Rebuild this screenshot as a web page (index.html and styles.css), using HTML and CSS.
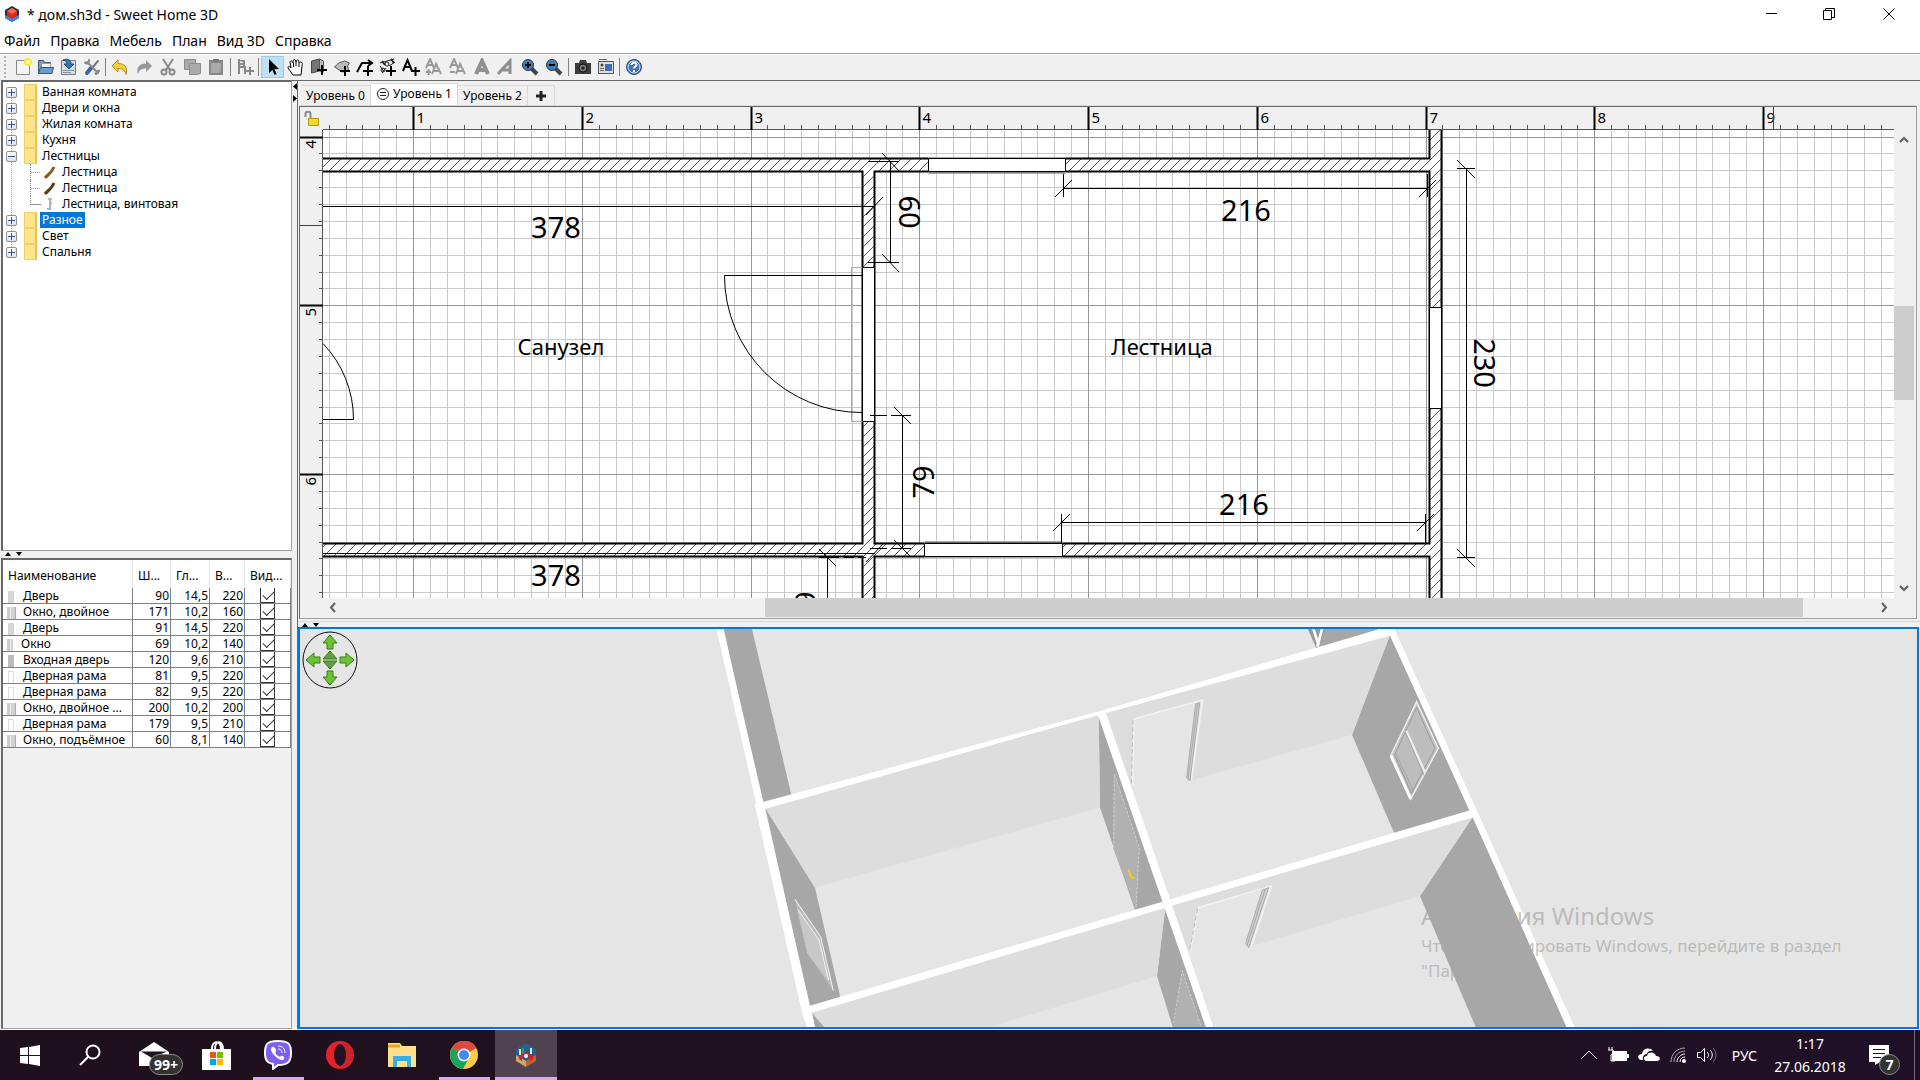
FILE: index.html
```html
<!DOCTYPE html>
<html lang="ru">
<head>
    <meta charset="UTF-8">
    <meta name="viewport" content="width=device-width, initial-scale=1.0">
    <title>дом.sh3d - Sweet Home 3D</title>
    <link rel="stylesheet" href="styles.css">
</head>
<body>
    <header class="titlebar">
        <svg class="app-icon" width="16" height="16" viewBox="0 0 16 16"><path d="M8 0l7 4v8l-7 4-7-4V4z" fill="#16304f"/><path d="M1 9l7 3 7-3v3l-7 4-7-4z" fill="#2f8fd8"/><path d="M8 2l5 3v5l-5 3-5-3V5z" fill="#e0251b"/><path d="M8 2l5 3-5 3-5-3z" fill="#ff6b4a"/></svg>
        <h1>* дом.sh3d - Sweet Home 3D</h1>
        <div class="window-buttons">
            <button aria-label="Свернуть"><svg width="12" height="12"><path d="M1 5.5h11" stroke="#000"/></svg></button>
            <button aria-label="Восстановить"><svg width="12" height="12" fill="none" stroke="#000"><path d="M.5 2.5h8v9h-8zM2.500 2.500v-2h9v9h-3"/></svg></button>
            <button aria-label="Закрыть"><svg width="12" height="12"><path d="M.5.5l11 11M11.500.500l-11 11" stroke="#000"/></svg></button>
        </div>
    </header>

    <nav class="menubar">
        <button>Файл</button>
        <button>Правка</button>
        <button>Мебель</button>
        <button>План</button>
        <button>Вид 3D</button>
        <button>Справка</button>
    </nav>

    <div class="toolbar">
        <span class="grip"></span>
        <div class="tools">
            <button aria-label="Новый"><svg width="18" height="18"><path d="M2.500 2.500h13v14h-13z" fill="#f4f4f4" stroke="#8a8a8a"/><circle cx="14" cy="4" r="4" fill="#f8ea3c"/><circle cx="14" cy="4" r="2" fill="#fffbb0"/></svg></button>
            <button aria-label="Открыть"><svg width="18" height="18"><path d="M1.500 15V2.500h5l1 2h6V15z" fill="#8b98a8" stroke="#4d5d70"/><path d="M4.500 5.500h9v5h-9z" fill="#f6f6f6" stroke="#999"/><path d="M1.500 15.500l2-6h13l-1.500 6z" fill="#6d9ccc" stroke="#2c5a92"/></svg></button>
            <button aria-label="Сохранить"><svg width="18" height="18"><path d="M1.500 2.500h14v14h-14z" fill="#d9dde0" stroke="#778"/><path d="M3 12.500h11M3 14.500h8" stroke="#8a9298"/><path d="M3 2c5-2 8 0 8 4h3l-5 5-5-5h3c0-2-1-3-4-4z" fill="#2d78b4" stroke="#1b4f80"/></svg></button>
            <button aria-label="Настройки"><svg width="18" height="18" fill="none" stroke-linecap="round"><path d="M15 3L9 10" stroke="#777" stroke-width="2"/><path d="M8 10l-4 5" stroke="#3566a8" stroke-width="4"/><path d="M4 4l11 11" stroke="#888" stroke-width="2"/><path d="M2 4.500c2 2 4 1 4-2.500" stroke="#888" stroke-width="2"/><path d="M13 15.500l2.500-2.500" stroke="#888" stroke-width="3"/></svg></button>
        </div>
        <span class="sep"></span>
        <div class="tools wide">
            <button aria-label="Отменить"><svg width="18" height="18"><path d="M1 8l6-6v3.500c7 0 10 4 8 11-1-4-3-6-8-6V14z" fill="#f3cf3a" stroke="#b8901a"/></svg></button>
            <button aria-label="Повторить"><svg width="18" height="18"><path d="M17 8l-6-6v3.500c-7 0-10 4-8 11 1-4 3-6 8-6V14z" fill="#999"/></svg></button>
            <button aria-label="Вырезать"><svg width="18" height="18" fill="none" stroke="#888" stroke-width="2"><path d="M4 1l7 11M14 1L7 12"/><circle cx="5" cy="14" r="2.500"/><circle cx="13" cy="14" r="2.500"/></svg></button>
            <button aria-label="Копировать"><svg width="18" height="18" fill="#aaa" stroke="#8d8d8d"><path d="M1.500 1.500h11v10h-11z"/><path d="M6.500 5.500h11v10l-3 1h-8z"/></svg></button>
            <button aria-label="Вставить"><svg width="18" height="18"><path d="M2 2h14v15H2z" fill="#888"/><path d="M4 5h10v8l-2 2H4z" fill="#aaa"/><path d="M6 1h6v3H6z" fill="#777"/></svg></button>
        </div>
        <span class="sep"></span>
        <div class="tools">
            <button aria-label="Добавить мебель"><svg width="18" height="18" fill="none" stroke="#888" stroke-width="2"><path d="M3 1v15M3 9h6v7M3 2l5 1v6M4 6h4M10 13h8M14 9v8"/></svg></button>
        </div>
        <span class="sep"></span>
        <div class="tools">
            <button class="pressed" aria-label="Выбрать"><svg width="18" height="18"><path d="M5 1v14l3.500-3 2 5 2-1-2-5H15z" fill="#000"/></svg></button>
            <button aria-label="Панорама"><svg width="18" height="18"><path d="M6 17l-5-7c0-2 2-2 3 0L3 4c1-2 2-1 3 1 0-4 2-5 3-1 1-3 3-3 3 1 2-2 4-1 3 3l-1 9z" fill="#fff" stroke="#000"/><path d="M6.500 5v4M9 4v4M12 5v4" stroke="#000"/></svg></button>
            <button aria-label="Стены"><svg width="18" height="18"><path d="M1.500 3l8-2v12l-8 2z" fill="#777" stroke="#444"/><path d="M9.500 1l4 2v11l-4-1z" fill="#bbb" stroke="#555"/><path d="M7 12h10M12 7v10" stroke="#000" stroke-width="2"/></svg></button>
            <button aria-label="Комнаты"><svg width="18" height="18"><path d="M1.500 9l4-4 6-2 5 2-2 3 1 4-6 2z" fill="#bbb" stroke="#555"/><path d="M7 13h10M12 8v10" stroke="#000" stroke-width="2"/></svg></button>
            <button aria-label="Ломаные"><svg width="18" height="18" fill="none" stroke="#000" stroke-width="2"><path d="M1 14l5-9h9M12 2l4 3-4 3M7 13h10M12 8v10"/></svg></button>
            <button aria-label="Размеры"><svg width="18" height="18" fill="none" stroke="#222"><path d="M1 5l14-4M1 8l4 6M3 15l4-5M10 8l6-4" stroke-width="1"/><path d="M3 3l3 4M12 1l3 4" stroke-width="2"/><circle cx="8" cy="6" r="2"/><circle cx="4" cy="12" r="2"/><path d="M7 13h10M12 8v10" stroke="#000" stroke-width="2"/></svg></button>
            <button aria-label="Текст"><svg width="18" height="18" fill="none" stroke="#000" stroke-width="2"><path d="M1 13L5.500 2 10 13M3 9h5M9 13h9M13.500 9v9"/></svg></button>
        </div>
        <div class="tools wide">
            <button aria-label="Увеличить текст"><svg width="18" height="18" fill="none" stroke="#999" stroke-width="2"><path d="M1 10L5 1l4 9M2 7h6M7 16l4-10 5 10M8 13h7M1 14h5M3.500 11v6"/></svg></button>
            <button aria-label="Уменьшить текст"><svg width="18" height="18" fill="none" stroke="#999" stroke-width="2"><path d="M1 10L5 1l4 9M2 7h6M7 16l4-10 5 10M8 13h7M1 14h5"/></svg></button>
            <button aria-label="Полужирный"><svg width="18" height="18" fill="none" stroke="#8f8f8f" stroke-width="4"><path d="M3 16L9 3l6 13M5 12h8"/></svg></button>
            <button aria-label="Курсив"><svg width="18" height="18" fill="none" stroke="#8f8f8f" stroke-width="3"><path d="M1 16L13 3v13M5 12h8"/></svg></button>
            <button aria-label="Увеличить"><svg width="18" height="18"><path d="M10 10l6 6" stroke="#444" stroke-width="4"/><circle cx="7" cy="7" r="5.500" fill="#3d7fc0" stroke="#333"/><path d="M4 7h6M7 4v6" stroke="#000" stroke-width="2"/></svg></button>
            <button aria-label="Уменьшить"><svg width="18" height="18"><path d="M10 10l6 6" stroke="#444" stroke-width="4"/><circle cx="7" cy="7" r="5.500" fill="#3d7fc0" stroke="#333"/><path d="M4 7h6" stroke="#000" stroke-width="2"/></svg></button>
        </div>
        <span class="sep"></span>
        <div class="tools">
            <button aria-label="Фото"><svg width="18" height="18"><path d="M1 5h4l1-3h6l1 3h4v11H1z" fill="#3b3b3b"/><circle cx="9" cy="10" r="4" fill="#777" stroke="#111"/><circle cx="9" cy="10" r="1.500" fill="#222"/></svg></button>
            <button aria-label="Видео"><svg width="18" height="18"><path d="M1.500 3.500h15v12h-15z" fill="#ddd" stroke="#555"/><path d="M8 6h7v7H8z" fill="#3c6fb4"/><circle cx="5" cy="7" r="1.500" fill="#444"/><path d="M3 10.500h4M3 12.500h4M2 1.500h8" stroke="#666"/></svg></button>
        </div>
        <span class="sep"></span>
        <div class="tools">
            <button aria-label="Справка"><svg width="18" height="18"><circle cx="9" cy="9" r="7.500" fill="#3f72b5" stroke="#1f4987"/><circle cx="9" cy="9" r="6" fill="none" stroke="#dbe7f5"/><path d="M6.500 7c0-3 5-3 5 0 0 1.500-2.500 1.500-2.500 3.500M9 12v2" fill="none" stroke="#fff" stroke-width="2"/></svg></button>
        </div>
    </div>

    <main class="workspace">
        <div class="side">
            <section class="catalog">
                <ul class="tree">
                    <li><i class="box plus"></i><i class="folder"></i><span>Ванная комната</span></li>
                    <li><i class="box plus"></i><i class="folder"></i><span>Двери и окна</span></li>
                    <li><i class="box plus"></i><i class="folder"></i><span>Жилая комната</span></li>
                    <li><i class="box plus"></i><i class="folder"></i><span>Кухня</span></li>
                    <li><i class="box"></i><i class="folder"></i><span>Лестницы</span></li>
                    <li class="leaf"><svg width="14" height="14"><path d="M2 13c2-3 6-4 9-11" fill="none" stroke="#8a5a1c" stroke-width="3"/></svg><span>Лестница</span></li>
                    <li class="leaf"><svg width="14" height="14"><path d="M2 13c2-3 6-4 9-11" fill="none" stroke="#5c3a12" stroke-width="3"/></svg><span>Лестница</span></li>
                    <li class="leaf last"><svg width="14" height="14"><path d="M5 2h4M7 1v12M7 6h2M4 12h4" fill="none" stroke="#b5b5b5" stroke-width="2"/></svg><span>Лестница, винтовая</span></li>
                    <li><i class="box plus"></i><i class="folder"></i><span class="selected">Разное</span></li>
                    <li><i class="box plus"></i><i class="folder"></i><span>Свет</span></li>
                    <li><i class="box plus"></i><i class="folder"></i><span>Спальня</span></li>
                </ul>
            </section>
            <div class="splitter"><svg width="24" height="5"><path d="M2 5l3-4 3 4zM13 1l3 4 3-4z"/></svg></div>
            <section class="furniture">
                <table>
                    <colgroup><col class="c-name"><col class="c-w"><col class="c-d"><col class="c-h"><col class="c-vis"></colgroup>
                    <thead><tr><th>Наименование</th><th>Ш...</th><th>Гл...</th><th>В...</th><th>Вид...</th></tr></thead>
                    <tbody>
                        <tr><td><i class="thumb door"></i>Дверь</td><td>90</td><td>14,5</td><td>220</td><td><input type="checkbox" checked aria-label="Видимость"></td></tr>
                        <tr><td><i class="thumb pane"></i>Окно, двойное</td><td>171</td><td>10,2</td><td>160</td><td><input type="checkbox" checked aria-label="Видимость"></td></tr>
                        <tr><td><i class="thumb door"></i>Дверь</td><td>91</td><td>14,5</td><td>220</td><td><input type="checkbox" checked aria-label="Видимость"></td></tr>
                        <tr><td><i class="thumb pane small"></i>Окно</td><td>69</td><td>10,2</td><td>140</td><td><input type="checkbox" checked aria-label="Видимость"></td></tr>
                        <tr><td><i class="thumb door entry"></i>Входная дверь</td><td>120</td><td>9,6</td><td>210</td><td><input type="checkbox" checked aria-label="Видимость"></td></tr>
                        <tr><td><i class="thumb frame"></i>Дверная рама</td><td>81</td><td>9,5</td><td>220</td><td><input type="checkbox" checked aria-label="Видимость"></td></tr>
                        <tr><td><i class="thumb frame"></i>Дверная рама</td><td>82</td><td>9,5</td><td>220</td><td><input type="checkbox" checked aria-label="Видимость"></td></tr>
                        <tr><td><i class="thumb pane"></i>Окно, двойное ...</td><td>200</td><td>10,2</td><td>200</td><td><input type="checkbox" checked aria-label="Видимость"></td></tr>
                        <tr><td><i class="thumb frame"></i>Дверная рама</td><td>179</td><td>9,5</td><td>210</td><td><input type="checkbox" checked aria-label="Видимость"></td></tr>
                        <tr><td><i class="thumb pane"></i>Окно, подъёмное</td><td>60</td><td>8,1</td><td>140</td><td><input type="checkbox" checked aria-label="Видимость"></td></tr>
                    </tbody>
                </table>
            </section>
        </div>

        <div class="vsplit"><svg width="6" height="30"><path d="M5 2v7L1 5.500zM1 14v7l4-3.500z"/></svg></div>

        <div class="home">
            <section class="plan">
                <div class="levels">
                    <button>Уровень 0</button>
                    <button class="active"><svg width="14" height="14" fill="none" stroke="#222"><circle cx="7" cy="7" r="5.500"/><path d="M4 5.500h6M4 8.500h6"/></svg>Уровень 1</button>
                    <button>Уровень 2</button>
                    <button class="add" aria-label="Добавить уровень"><svg width="12" height="12"><path d="M6 1v10M1 6h10" stroke="#222" stroke-width="3"/></svg></button>
                </div>
                <div class="plan-grid">
                    <div class="lock"><svg width="16" height="18"><path d="M1.500 7V4c0-3 5-3 5 0v5" fill="none" stroke="#888" stroke-width="2"/><path d="M4.500 8.500h10v7h-10z" fill="#f2d92a" stroke="#b59a14"/></svg></div>
                    <svg class="ruler-top" id="rulerTop"></svg>
                    <div class="corner"></div>
                    <svg class="ruler-left" id="rulerLeft"></svg>
                    <svg class="drawing">
                        <defs>
                            <pattern id="hatch" width="10" height="10" patternUnits="userSpaceOnUse">
                                <path d="M0 0h10v10H0z" fill="#fff"/>
                                <path d="M-1 11L11 -1M-1 1L1 -1M9 11L11 9" stroke="#555" stroke-width="1"/>
                            </pattern>
                        </defs>
                        <g id="gridLines"></g>
                        <g transform="translate(-323 -130)">
                            <!-- стены -->
                            <path class="wall-fill" d="M300 158H1429V120H1442V610H1429V556H874V610H862V556H300V543H862V171H300zM874 171V543H1429V171z" fill-rule="evenodd"/>
                            <path class="wall" d="M300 158.500H1429.500V120M300 171.500H862.500V543.500H300M300 556.500H862.500V610M874.500 610V556.500H1429.500V610M1441.500 120V610M874.500 171.500H1429.500V543.500H874.500z"/>
                            <!-- окна и двери -->
                            <path class="ghost" d="M851.500 267.500h23v154h-23zM928.500 157.500h137v16h-137zM924.500 541.500h138v16h-138z"/>
                            <path class="opening" d="M862.500 267.500h12v154h-12zM928.500 158.500h137v13h-137zM924.500 543.500h138v13h-138zM1429.500 307.500h12v101h-12z"/>
                            <path class="line" d="M862 275.500H724.500A137 137 0 0 0 862 412.500"/>
                            <path class="line" d="M323 343.500A110 110 0 0 1 353.500 419.500H323"/>
                            <!-- размеры -->
                            <path class="line" d="M323 206.500H875M866 215l17 -18M323 553.500H875M866 562l17 -18"/>
                            <path class="line" d="M890.500 161V262M868 161.500h31M868 262.500h31M882 153l17 18M882 254l17 18"/>
                            <path class="line" d="M902.500 415V548M870 415.500h17M891 415.500h20M870 548.500h17M891 548.500h20M894 407l17 17M894 540l17 17"/>
                            <path class="line" d="M1063 188.500H1428M1063.500 174v23M1427.500 174v23M1055 197l17 -17M1419 197l17 -17"/>
                            <path class="line" d="M1061 522.500H1426M1061.500 514v29M1425.500 514v29M1053 531l17 -17M1417 531l17 -17"/>
                            <path class="line" d="M1466.500 168V557M1457 168.500h18M1457 557.500h18M1457 160l18 18M1457 549l18 18"/>
                            <path class="line" d="M819 557.500h20M844 557.500h10M858 557.500h8M827.500 557V610M819 549l17 17"/>
                            <g class="dim">
                                <text x="556" y="238">378</text>
                                <text x="556" y="586">378</text>
                                <text x="1246" y="221">216</text>
                                <text x="1244" y="515">216</text>
                                <text transform="translate(899 212) rotate(90)">60</text>
                                <text transform="translate(934 482) rotate(-90)">79</text>
                                <text transform="translate(1474 363) rotate(90)">230</text>
                                <text transform="translate(816 608) rotate(-90)">79</text>
                            </g>
                            <g class="room">
                                <text x="561" y="355">Санузел</text>
                                <text x="1162" y="355">Лестница</text>
                            </g>
                        </g>
                    </svg>
                    <div class="scroll-v">
                        <svg width="20" height="20"><path d="M6 12l4-4 4 4" fill="none" stroke="#606060" stroke-width="2"/></svg>
                        <div class="track-v"><div class="thumb-v"></div></div>
                        <svg width="20" height="20"><path d="M6 8l4 4 4-4" fill="none" stroke="#606060" stroke-width="2"/></svg>
                    </div>
                    <div class="scroll-h">
                        <svg width="20" height="20"><path d="M12 5L8 9.500l4 4.500" fill="none" stroke="#606060" stroke-width="2"/></svg>
                        <div class="track-h"><div class="thumb-h"></div></div>
                        <svg width="20" height="20"><path d="M8 5l4 4.500L8 14" fill="none" stroke="#606060" stroke-width="2"/></svg>
                    </div>
                </div>
            </section>

            <div class="splitter"><svg width="24" height="5"><path d="M2 5l3-4 3 4zM13 1l3 4 3-4z"/></svg></div>

            <section class="view3d">
                <svg class="scene">
                    <g transform="translate(400 -9) scale(.33333)">
                        <!-- затенённые стены -->
                        <g fill="#a7a7a7">
                            <path d="M70 20H154L274 524L188 550z"/>
                            <path d="M196 564L345 803L421 1132L328 1160z"/>
                            <path d="M336 1176L375 1224H345z"/>
                            <path d="M1196 285L1200 562L1305 870L1390 848z"/>
                            <path d="M1395 865L1371 1068L1420 1226H1524z"/>
                            <path d="M2070 44L2310 575L2082 638L1956 344z"/>
                            <path d="M2318 590L2602 1226H2329L2160 828z"/>
                            <path d="M1880 20H2060L1846 86z"/>
                        </g>
                        <!-- светлые стены -->
                        <g fill="#ddd">
                            <path d="M196 564L1196 285L1200 562L345 803z"/>
                            <path d="M336 1178L1396 865L1371 1068L860 1224H375z"/>
                            <path d="M1215 280L2070 46L1956 344L1475 481L1508 240L1302 297L1295 510z"/>
                            <path d="M1415 856L2318 592L2160 828L1658 978L1714 798L1495 862L1468 1000z"/>
                        </g>
                        <!-- дверные рамы -->
                        <g fill="none" stroke="#f1f1f1" stroke-width="5">
                            <path d="M1302 297L1508 240L1474 479M1302 297L1297 500"/>
                            <path d="M1495 863L1714 798L1655 978M1495 863L1470 1000"/>
                        </g>
                        <g fill="#cfcfcf" stroke="#a9a9a9" stroke-width="3">
                            <path d="M1487 252L1499 248L1470 482L1460 474zM1493 250L1464 478"/>
                            <path d="M1687 811L1706 803L1646 983L1637 970zM1696 806L1641 976"/>
                        </g>
                        <path d="M1299 300L1294 500M1493 866L1468 996" stroke="#bbb" stroke-width="3" stroke-dasharray="14 8"/>
                        <!-- двери -->
                        <g fill="#b1b1b1">
                            <path d="M1243 462L1318 683L1308 867L1239 683z"/>
                            <path d="M1447 1052L1505 1224H1420z"/>
                        </g>
                        <path d="M1241 683L1243 462L1318 683L1308 867M1420 1210L1447 1052L1505 1224" fill="none" stroke="#e4e4e4" stroke-width="2" stroke-dasharray="8 5"/>
                        <path d="M1286 748Q1290 775 1304 775" fill="none" stroke="#f2d20a" stroke-width="6"/>
                        <!-- окна -->
                        <path d="M285 838L362 950L400 1112L322 1000z" fill="#bcbcbc"/>
                        <path d="M322 1000L292 870L355 960L388 1085z" fill="#c8c8c8"/>
                        <path d="M285 838L362 950L400 1112M293 868L357 960L386 1080" fill="none" stroke="#f5f5f5" stroke-width="3"/>
                        <path d="M2150 245L2215 385L2132 538L2072 407z" fill="#c2c2c2" stroke="#f2f2f2" stroke-width="4"/>
                        <path d="M2150 262L2205 386L2134 520L2084 405z" fill="#bdbdbd" stroke="#999" stroke-width="3"/>
                        <path d="M2073 407L2132 536" stroke="#fff" stroke-width="9"/>
                        <path d="M2119 332L2176 460" stroke="#eee" stroke-width="7"/>
                        <path d="M2117 337L2172 466M2088 402L2140 512" stroke="#999" stroke-width="2"/>
                        <path d="M1820 20H1880L1850 86z" fill="#999"/>
                        <path d="M1838 20L1856 76M1868 20L1852 80" stroke="#fff" stroke-width="8"/>
                        <!-- торцы стен -->
                        <g fill="#fff">
                            <path d="M48 20H68L190 545L330 1157L346 1226H323L308 1185L167 565L163 553L169 552z"/>
                            <path d="M185 547L1200 273L2065 20H2085L2070 47L1215 280L195 567z"/>
                            <path d="M325 1159L1387 845L2310 571L2320 592L1415 857L330 1180z"/>
                            <path d="M1194 286L1218 279L1410 838L1542 1226H1519L1395 867z"/>
                            <path d="M2067 40L2080 20L2330 570L2460 860L2626 1226H2602L2318 592z"/>
                        </g>
                    </g>
                </svg>
                <svg class="compass" width="56" height="60">
                    <ellipse cx="28" cy="30" rx="27" ry="28" fill="none" stroke="#111"/>
                    <g fill="#6cc433" stroke="#3a7d14">
                        <path d="M28 5l7 8h-4v6h-6v-6h-4z"/>
                        <path d="M28 55l7-8h-4v-6h-6v6h-4z"/>
                        <path d="M4 30l8-7v4h6v6h-6v4z"/>
                        <path d="M52 30l-8-7v4h-6v6h6v4z"/>
                        <path d="M28 21l7 8H21zM28 39l7-8H21z" fill="#5fa044"/>
                    </g>
                </svg>
                <div class="watermark">
                    <h2>Активация Windows</h2>
                    <p>Чтобы активировать Windows, перейдите в раздел<br>"Параметры".</p>
                </div>
            </section>
        </div>
    </main>

    <footer class="taskbar">
        <button class="task narrow" aria-label="Пуск"><svg width="20" height="22" fill="#fff"><path d="M0 4l8-1v8H0zM9 3l11-2v10H9zM0 12h8v8l-8-1zM9 12h11v10L9 20z"/></svg></button>
        <button class="task narrow search" aria-label="Поиск"><svg width="22" height="22" fill="none" stroke="#fff" stroke-width="2"><circle cx="14" cy="8" r="6.500"/><path d="M9.500 12.500L1 21"/></svg></button>
        <button class="task" aria-label="Почта"><svg width="30" height="26" fill="#fff"><path d="M0 10L15 0l15 10v14H0z"/><path d="M2 9.500h26L13 16z" fill="#201220"/></svg><span class="badge">99+</span></button>
        <button class="task" aria-label="Магазин"><svg width="29" height="30"><path d="M0 9h29v21H0z" fill="#fff"/><path d="M10 9c0-9 9-9 9 0M13 9c0-9 8-9 8 0" fill="none" stroke="#fff" stroke-width="2"/><path d="M8 12h6v6H8z" fill="#f25022"/><path d="M15 12h6v6h-6z" fill="#7fba00"/><path d="M8 19h6v6H8z" fill="#00a4ef"/><path d="M15 19h6v6h-6z" fill="#ffb900"/></svg></button>
        <button class="task open" aria-label="Viber"><svg width="30" height="30"><path d="M15 1c11 0 13 3 13 12s-3 12-13 12l-5 4v-5c-6-1-8-4-8-11C2 4 4 1 15 1z" fill="#7d5ef0" stroke="#fff" stroke-width="2"/><path d="M9 7c-2 2-1 5 3 9s8 5 9 3-2-4-3-3-2 1-4-1-2-3-1-4-2-5-4-4z" fill="#fff"/><path d="M15 6c5 0 7 3 7 7M15 9c3 0 4 2 4 4" fill="none" stroke="#fff"/></svg></button>
        <button class="task" aria-label="Opera"><svg width="30" height="30"><ellipse cx="15" cy="15" rx="14" ry="14" fill="#e8202c"/><path d="M15 1c18 0 18 28 0 28 8-3 8-25 0-28z" fill="#c9232c"/><ellipse cx="15" cy="15" rx="6" ry="11" fill="#201220"/></svg></button>
        <button class="task" aria-label="Проводник"><svg width="28" height="26"><path d="M0 1h12l2 3h14v21H0z" fill="#ffe08a"/><path d="M0 4h12" stroke="#e6a817" stroke-width="3"/><path d="M5 25V14h18v11h-4v-6H9v6z" fill="#35b0e6"/></svg></button>
        <button class="task open" aria-label="Chrome"><svg width="28" height="28"><circle cx="14" cy="14" r="14" fill="#fc4"/><path d="M14 14L2 7a14 14 0 0 1 24.500 0z" fill="#dd4b3e"/><path d="M14 14L2 7a14 14 0 0 0 11 21l6-11z" fill="#1aa260"/><circle cx="14" cy="14" r="6.500" fill="#fff"/><circle cx="14" cy="14" r="5" fill="#4688f1"/></svg></button>
        <button class="task current" aria-label="Sweet Home 3D"><svg width="22" height="24"><path d="M11 0l10 6v12l-10 6-10-6V6z" fill="#27608f"/><path d="M1 12l10 6v6L1 18z" fill="#d9a066"/><path d="M21 12l-10 6v6l10-6z" fill="#b8632c"/><path d="M5 6v6M16 5v6" stroke="#d8e8dc" stroke-width="2"/><path d="M8 5v6" stroke="#3f9a4c" stroke-width="2"/><path d="M4 13l7-4 7 4v3l-3 2v-3h-8v3l-3-2z" fill="#d3202a"/><circle cx="11" cy="13" r="2" fill="#fff"/></svg></button>

        <div class="tray">
            <svg width="18" height="12"><path d="M1 10l8-8 8 8" fill="none" stroke="#fff"/></svg>
            <svg width="22" height="16"><path d="M5.500 4.500h14v9h-14z" fill="#fff" stroke="#fff"/><path d="M20 7h2v4h-2z" fill="#fff"/><path d="M1 3h5v4l-2 1v6h4M2 0v3M5 0v3" fill="none" stroke="#fff"/></svg>
            <svg width="22" height="14" fill="#fff"><path d="M3 12c-4-1-4-6 1-6 1-6 8-7 11-3-3-1-6 1-6 3-3 0-5 3-4 6z"/><path d="M8 13c-3-1-3-5 1-5 1-5 8-4 9 0 5 0 5 5 1 5z"/></svg>
            <svg width="18" height="18" fill="none"><path d="M2 16C2 8 8 2 16 2M5 16c0-6 5-11 11-11" stroke="#aaa"/><path d="M8 16c0-4 4-8 8-8M11 16c0-3 2-5 5-5" stroke="#fff"/><circle cx="15" cy="15" r="2" fill="#fff"/></svg>
            <svg width="22" height="16" fill="none" stroke="#fff"><path d="M1.500 5.500h3l4-4v13l-4-4h-3zM11 5c2 2 2 4 0 6M14 3c3 3 3 7 0 10"/><path d="M17 1c4 4 4 10 0 14" stroke="#777"/></svg>
            <span class="lang">РУС</span>
            <div class="clock"><time>1:17</time><span>27.06.2018</span></div>
            <button class="notice" aria-label="Уведомления"><svg width="20" height="20"><path d="M0 0h20v17h-9l-5 3v-3H0z" fill="#fff"/><path d="M4 4.500h12M4 8.500h12M4 12.500h8" stroke="#201220"/></svg><span class="badge">7</span></button>
        </div>
    </footer>

    <script src="script.js"></script>
</body>
</html>
```
FILE: styles.css
```css
* {
    box-sizing: border-box;
}
body {
    margin: 0;
    height: 100vh;
    display: flex;
    flex-direction: column;
    overflow: hidden;
    background: #f0f0f0;
    color: #000;
    font-family: "Noto Sans", "Open Sans", sans-serif;
    font-size: 12px;
}
button {
    margin: 0;
    padding: 0;
    border: none;
    background: none;
    color: inherit;
    font: inherit;
}
svg {
    display: block;
    flex: none;
}
ul, h1, h2, p {
    margin: 0;
    padding: 0;
}

/* заголовок и меню */
.titlebar {
    height: 28px;
    flex: none;
    display: flex;
    align-items: center;
    gap: 7px;
    padding-left: 4px;
    background: #fff;
}
.titlebar h1 {
    font-size: 14px;
    font-weight: normal;
}
.window-buttons {
    display: flex;
    margin-left: auto;
}
.window-buttons button {
    width: 58px;
    height: 28px;
    display: flex;
    align-items: center;
    justify-content: center;
}
.window-buttons button:last-child {
    width: 62px;
}
.menubar {
    height: 26px;
    flex: none;
    display: flex;
    align-items: center;
    gap: 10px;
    padding: 1px 4px 0;
    background: #fff;
    border-bottom: 1px solid #a0a0a0;
    font-size: 14px;
    line-height: 20px;
}

/* панель инструментов */
.toolbar {
    height: 26px;
    flex: none;
    display: flex;
    align-items: center;
    padding-bottom: 2px;
    border-top: 1px solid #fff;
}
.grip {
    width: 2px;
    height: 22px;
    margin: 0 5px 0 4px;
    background: repeating-linear-gradient(#b5b5b5 0 2px, #f0f0f0 2px 4px);
}
.tools {
    display: flex;
}
.tools button {
    width: 23px;
    height: 22px;
    display: flex;
    align-items: center;
    justify-content: center;
}
.tools.wide button {
    width: 24px;
}
.tools .pressed {
    background: #bfdff6;
    outline: 1px solid #99cdf0;
    outline-offset: -1px;
}
.sep {
    width: 1px;
    height: 18px;
    margin: 0 2px;
    background: #808080;
}

/* рабочая область */
.workspace {
    flex: 1;
    min-height: 0;
    display: grid;
    grid-template-columns: 292px 6px 1fr;
    border-bottom: 1px solid #fff;
}
.side {
    display: grid;
    grid-template-rows: 1fr 7px 1fr;
    min-height: 0;
    padding-left: 1px;
}
.catalog, .furniture {
    border: 1px solid #a0a0a0;
    border-top: 2px solid #696969;
    border-left: 2px solid #696969;
    min-height: 0;
    overflow: hidden;
}
.catalog {
    background: #fff;
}
.splitter {
    padding-left: 2px;
}
.splitter svg {
    height: 5px;
}
.vsplit {
    border-right: 1px solid #696969;
    border-top: 1px solid #696969;
}

/* дерево каталога */
.tree {
    list-style: none;
    padding: 2px 3px;
}
.tree li {
    height: 16px;
    display: flex;
    align-items: center;
    line-height: 16px;
    background: repeating-linear-gradient(#999 0 1px, transparent 1px 2px) 5px 0 / 1px 16px no-repeat;
}
.tree li:first-child {
    background-position: 5px 8px;
}
.tree li:last-child {
    background-size: 1px 8px;
}
.tree span {
    padding: 0 2px;
    margin-left: 3px;
    white-space: nowrap;
}
.tree .selected {
    background: #0078d7;
    color: #fff;
}
.box {
    width: 11px;
    height: 11px;
    border: 1px solid #8e8e8e;
    border-radius: 2px;
    background: linear-gradient(#33559a, #33559a) center / 7px 1px no-repeat, linear-gradient(#fff, #e2e2e2);
}
.box.plus {
    background: linear-gradient(#33559a, #33559a) center / 7px 1px no-repeat, linear-gradient(#33559a, #33559a) center / 1px 7px no-repeat, linear-gradient(#fff, #e2e2e2);
}
.folder {
    width: 13px;
    height: 16px;
    margin-left: 7px;
    border: 1px solid #f2cf66;
    border-right: 2px solid #ecc24b;
    background: #ffe48f;
}
.tree .leaf {
    padding-left: 24px;
}
.leaf::before {
    content: "";
    width: 10px;
    height: 16px;
    border-left: 1px dotted #888;
    background: repeating-linear-gradient(90deg, #999 0 1px, transparent 1px 2px) 0 8px / 10px 1px no-repeat;
}
.leaf.last::before {
    height: 8px;
    align-self: flex-start;
    border-bottom: 1px dotted #888;
}
.leaf svg {
    margin-left: 2px;
}

/* таблица мебели */
.furniture table {
    width: 100%;
    table-layout: fixed;
    border-collapse: separate;
    border-spacing: 0;
}
.c-name { width: 130px; }
.c-w { width: 38px; }
.c-d { width: 39px; }
.c-h { width: 35px; }
.furniture th {
    height: 28px;
    padding: 2px 5px 0;
    background: #fff;
    border-right: 1px solid #e5e5e5;
    font-weight: normal;
    text-align: left;
    white-space: nowrap;
}
.furniture td {
    height: 16px;
    padding: 0 1px;
    background: #fff;
    border-right: 1px solid #808080;
    border-bottom: 1px solid #808080;
    line-height: 15px;
    text-align: right;
    white-space: nowrap;
    overflow: hidden;
}
.furniture td:first-child {
    text-align: left;
    padding-left: 4px;
}
.furniture td:last-child {
    padding: 0;
    text-align: center;
}
.furniture input {
    appearance: none;
    display: block;
    width: 15px;
    height: 15px;
    margin: 0 auto;
    border: 1px solid #333;
    border-top: none;
}
.furniture input:checked::before {
    content: "";
    display: block;
    width: 10px;
    height: 5px;
    margin: 3px 0 0 2px;
    border-left: 1px solid #333;
    border-bottom: 1px solid #333;
    transform: rotate(-45deg);
}
.thumb {
    display: inline-block;
    width: 6px;
    height: 12px;
    margin: 0 9px 0 1px;
    vertical-align: middle;
    background: #d6d6d6;
}
.thumb.pane {
    width: 9px;
    margin: 0 7px 0 0;
    background: linear-gradient(90deg, #ccc 3px, #eee 3px 4px, #d2d2d2 4px 8px, #aaa 8px);
}
.thumb.pane.small {
    width: 6px;
    margin-right: 8px;
}
.thumb.entry {
    background: #bcbcbc;
}
.thumb.frame {
    background: none;
    border: 1px solid #ddd;
    border-bottom: none;
}

/* план */
.home {
    display: grid;
    grid-template-rows: 542fr 5px 402fr;
    min-width: 0;
    min-height: 0;
    border-top: 1px solid #696969;
}
.plan {
    display: flex;
    flex-direction: column;
    min-height: 0;
    padding: 3px 3px 2px 1px;
    border-bottom: 1px solid #d9d9d9;
}
.levels {
    display: flex;
    align-items: flex-end;
    height: 22px;
    padding-left: 2px;
    flex: none;
    border-bottom: 1px solid #d9d9d9;
}
.levels button {
    height: 20px;
    padding: 0 5px;
    display: flex;
    align-items: center;
    gap: 3px;
    border: 1px solid #d9d9d9;
    border-left: none;
    border-bottom: none;
}
.levels .active {
    height: 22px;
    padding-bottom: 2px;
    background: #fff;
}
.levels .add {
    padding: 0 7px;
}
.plan-grid {
    flex: 1;
    min-height: 0;
    display: grid;
    grid-template-columns: 23px 1fr 20px;
    grid-template-rows: 23px 1fr 20px;
    border: 1px solid #a0a0a0;
    border-top: 1px solid #696969;
    border-left: 1px solid #696969;
    padding-right: 2px;
}
.lock {
    padding: 3px 4px;
}
.ruler-top, .ruler-left, .drawing {
    width: 100%;
    height: 100%;
    min-width: 0;
    min-height: 0;
    overflow: hidden;
}
.ruler-top text, .ruler-left text {
    font-size: 15px;
}
.drawing {
    background: #fff;
}
.grid-minor { stroke: #c9c9c9; }
.grid-major { stroke: #969696; }
.tick { stroke: #555; }
.tick-major { stroke: #000; stroke-width: 2; }
.pointer { stroke: #00509a; }
.wall-fill { fill: url(#hatch); }
.wall { fill: none; stroke: #000; stroke-width: 2; }
.ghost { fill: none; stroke: #aaa; }
.opening { fill: #fff; stroke: #000; }
.line { fill: none; stroke: #000; }
.dim text {
    font-size: 29px;
    text-anchor: middle;
}
.room text {
    font-size: 22px;
    text-anchor: middle;
}
.scroll-v {
    display: flex;
    flex-direction: column;
}
.track-v {
    flex: 1;
}
.thumb-v {
    height: 22%;
    margin-top: 156px;
    background: #cdcdcd;
}
.scroll-h {
    grid-column: 2;
    display: flex;
}
.track-h {
    flex: 1;
}
.thumb-h {
    width: 67.8%;
    height: 19px;
    margin-left: 422px;
    background: #cdcdcd;
}

/* трёхмерный вид */
.view3d {
    position: relative;
    min-height: 0;
    margin-right: 1px;
    border: 2px solid #0078d7;
    background: #e5e5e5;
    overflow: hidden;
}
.scene {
    width: 100%;
    height: 100%;
}
.compass {
    position: absolute;
    left: 2px;
    top: 1px;
}
.watermark {
    position: absolute;
    left: 1121px;
    top: 270px;
    color: rgba(168, 168, 168, .7);
}
.watermark h2 {
    font-size: 24px;
    line-height: 34px;
    font-weight: normal;
}
.watermark p {
    font-size: 17px;
    line-height: 25px;
}

/* панель задач */
.taskbar {
    height: 50px;
    flex: none;
    display: flex;
    background: linear-gradient(90deg, #1e111d, #20121f 70%, #1f1029);
    color: #fff;
}
.task {
    position: relative;
    width: 62px;
    display: flex;
    align-items: center;
    justify-content: center;
}
.task.narrow {
    width: 60px;
}
.task.search {
    width: 63px;
    padding-right: 4px;
}
.task.open::after, .task.current::after {
    content: "";
    position: absolute;
    left: 6px;
    right: 5px;
    bottom: 0;
    height: 3px;
    background: #d8a9f0;
}
.task.current {
    background: #50434f;
}
.task.current::after {
    left: 0;
    right: 0;
}
.badge {
    position: absolute;
    left: 26px;
    bottom: 5px;
    height: 21px;
    padding: 0 4px;
    border: 1px solid #8c8c8c;
    border-radius: 11px;
    background: #333;
    font-size: 14px;
    font-weight: bold;
    line-height: 19px;
}
.tray {
    display: flex;
    align-items: center;
    gap: 9px;
    margin-left: auto;
    font-size: 14px;
}
.lang {
    margin-left: 5px;
}
.clock {
    width: 88px;
    display: flex;
    flex-direction: column;
    align-items: center;
    line-height: 23px;
}
.notice {
    position: relative;
    height: 50px;
    width: 52px;
    display: flex;
    align-items: center;
    padding-left: 6px;
    border-right: 1px solid #75697a;
    margin-right: 5px;
}
.notice .badge {
    left: 16px;
    width: 21px;
    padding: 0 5px;
}
```
FILE: script.js
```js
// шаг сетки: 1 метр = 168.75 пикселя
const METER = 168.75;
const FIRST_X = 90.5;   // метка "1" на горизонтальной линейке
const FIRST_Y = 7;      // метка "4" на вертикальной линейке

function addLine(parent, cls, x1, y1, x2, y2) {
    const line = document.createElementNS("http://www.w3.org/2000/svg", "line");
    line.setAttribute("class", cls);
    line.setAttribute("x1", x1);
    line.setAttribute("y1", y1);
    line.setAttribute("x2", x2);
    line.setAttribute("y2", y2);
    parent.appendChild(line);
}

function addLabel(parent, text, transform) {
    const label = document.createElementNS("http://www.w3.org/2000/svg", "text");
    label.setAttribute("transform", transform);
    label.textContent = text;
    parent.appendChild(label);
}

const grid = document.getElementById("gridLines");
const rulerTop = document.getElementById("rulerTop");
const rulerLeft = document.getElementById("rulerLeft");
const width = rulerTop.clientWidth || 1571;
const height = rulerLeft.clientHeight || 467;

addLine(rulerTop, "tick", 0, 22.5, width, 22.5);
addLine(rulerLeft, "tick", 22.5, 0, 22.5, height);

for (const major of [false, true]) {
    const cls = major ? "grid-major" : "grid-minor";
    for (let i = -5; FIRST_X + i * METER / 10 < width; i++) {
        if ((i % 10 === 0) !== major) continue;
        const x = Math.floor(FIRST_X + i * METER / 10) + 0.5;
        addLine(grid, cls, x, 0, x, height);
        addLine(rulerTop, major ? "tick-major" : "tick", x, major ? 0 : 18, x, 23);
        if (major) addLabel(rulerTop, 1 + i / 10, `translate(${x + 3} 16)`);
    }
    for (let i = 0; FIRST_Y + i * METER / 10 < height; i++) {
        if ((i % 10 === 0) !== major) continue;
        const y = Math.floor(FIRST_Y + i * METER / 10) + 0.5;
        addLine(grid, cls, 0, y, width, y);
        addLine(rulerLeft, major ? "tick-major" : "tick", major ? 0 : 19, y, 23, y);
        if (major) addLabel(rulerLeft, 4 + i / 10, `translate(16 ${y + 11}) rotate(-90)`);
    }
}

// положение курсора на линейках
addLine(rulerTop, "pointer", 1450.5, 0, 1450.5, 23);
addLine(rulerLeft, "pointer", 0, 95.5, 23, 95.5);
```
